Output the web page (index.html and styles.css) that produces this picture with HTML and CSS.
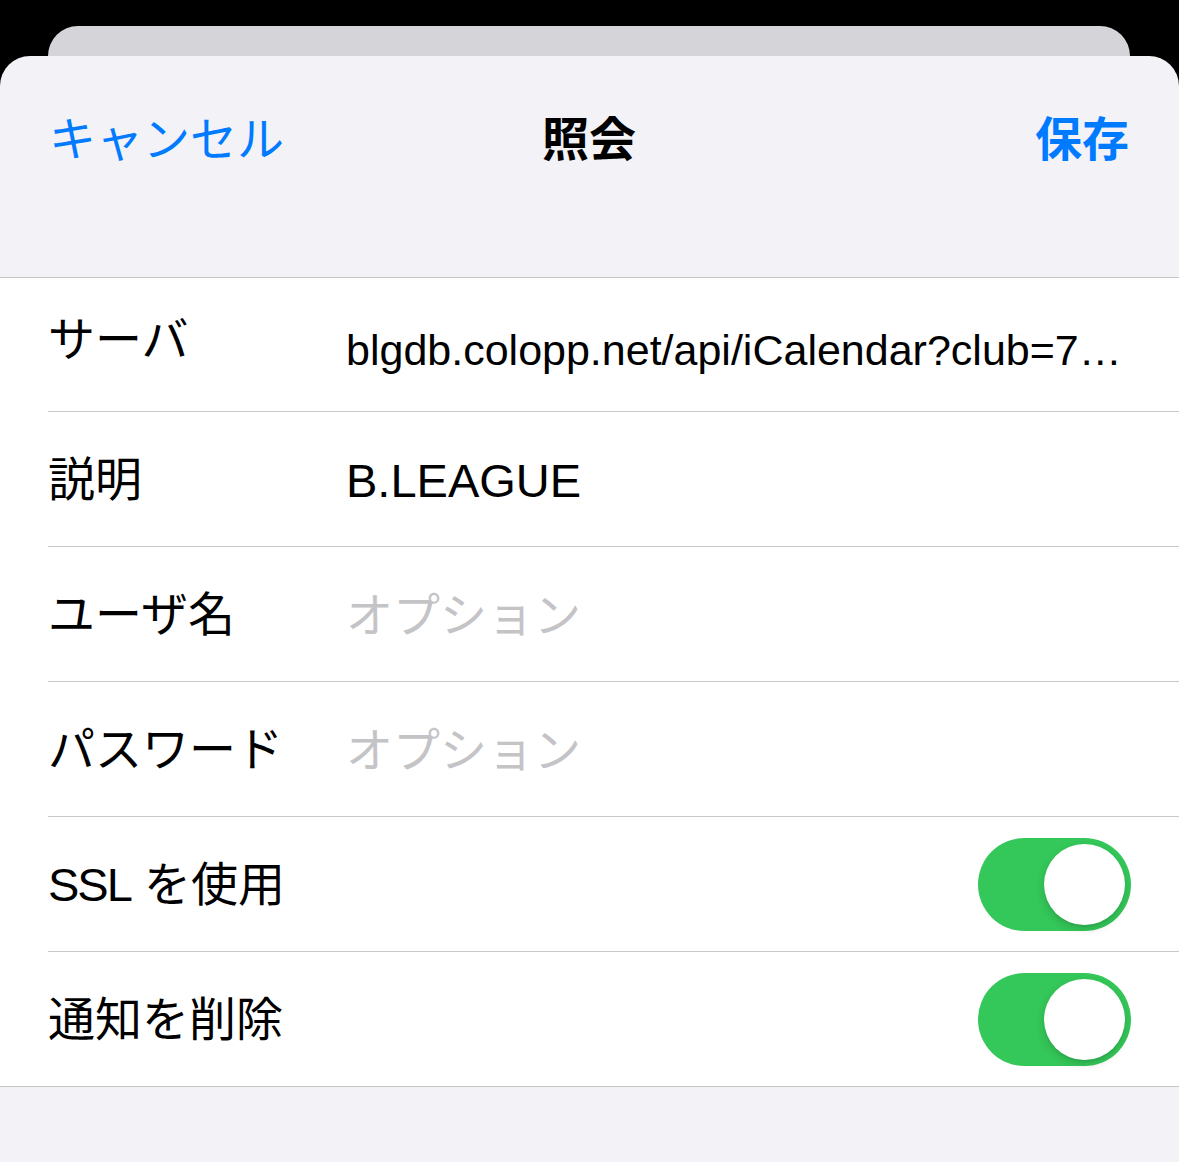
FILE: index.html
```html
<!DOCTYPE html>
<html lang="ja">
<head>
<meta charset="utf-8">
<title>照会</title>
<link rel="stylesheet" href="styles.css">
</head>
<body>
<div class="screen">
  <div class="back-card"></div>
  <div class="sheet">
    <header class="nav">
      <div class="nav-bar">
        <span class="nav-btn cancel">キャンセル</span>
        <span class="nav-title">照会</span>
        <span class="nav-btn save">保存</span>
      </div>
    </header>
    <section class="list">
      <div class="row row-server">
        <span class="label">サーバ</span>
        <span class="value url">blgdb.colopp.net/api/iCalendar?club=7…</span>
      </div>
      <div class="row">
        <span class="label">説明</span>
        <span class="value">B.LEAGUE</span>
      </div>
      <div class="row">
        <span class="label">ユーザ名</span>
        <span class="value placeholder">オプション</span>
      </div>
      <div class="row">
        <span class="label">パスワード</span>
        <span class="value placeholder">オプション</span>
      </div>
      <div class="row">
        <span class="label"><span class="latin">SSL</span> を使用</span>
        <span class="toggle"><span class="knob"></span></span>
      </div>
      <div class="row last">
        <span class="label">通知を削除</span>
        <span class="toggle"><span class="knob"></span></span>
      </div>
    </section>
  </div>
</div>
</body>
</html>
```
FILE: styles.css
```css
html, body {
  margin: 0;
  padding: 0;
  background: #000;
}
body {
  font-family: "Liberation Sans", "Noto Sans CJK JP", sans-serif;
  color: #000;
}
.screen {
  width: 1179px;
  height: 1162px;
  overflow: hidden;
  padding-top: 26px;
  box-sizing: border-box;
  display: flex;
  flex-direction: column;
}
.back-card {
  height: 30px;
  margin: 0 49px 0 48px;
  background: #d4d4d9;
  border-radius: 30px 30px 0 0;
  flex: none;
}
.sheet {
  flex: 1;
  background: #f2f2f7;
  border-radius: 30px 30px 0 0;
}
.nav {
  height: 221px;
  border-bottom: 1px solid #c6c6c8;
}
.nav-bar {
  height: 168px;
  display: grid;
  grid-template-columns: 1fr auto 1fr;
  align-items: center;
  padding: 0 50px 0 49px;
}
.nav-btn {
  font-size: 47px;
  line-height: 1.2;
  color: #007aff;
}
.cancel {
  justify-self: start;
}
.save {
  justify-self: end;
  font-weight: bold;
}
.nav-title {
  font-size: 47px;
  line-height: 1.2;
  font-weight: bold;
}
.list {
  background: #fff;
  border-bottom: 1px solid #c6c6c8;
}
.row {
  margin-left: 48px;
  height: 134px;
  border-bottom: 1px solid #c8c8ca;
  display: flex;
  align-items: center;
}
.row.last {
  border-bottom: none;
}
.row-server {
  height: 133px;
}
.label {
  width: 298px;
  flex: none;
  font-size: 47px;
  line-height: 1.2;
  padding-top: 3px;
}
.latin {
  letter-spacing: -2px;
}
.value {
  font-size: 47px;
  line-height: 1.2;
  white-space: nowrap;
  padding-top: 5px;
}
.url {
  font-size: 43px;
  padding-top: 12px;
}
.row-server .label {
  padding-top: 0;
  padding-bottom: 8px;
}
.placeholder {
  color: #c4c4c7;
}
.toggle {
  margin-left: auto;
  margin-right: 48px;
  width: 153px;
  height: 93px;
  border-radius: 47px;
  background: #34c759;
  box-sizing: border-box;
  padding: 6px;
  display: flex;
  justify-content: flex-end;
}
.knob {
  width: 81px;
  height: 81px;
  border-radius: 50%;
  background: #fff;
  box-shadow: 0 4px 10px rgba(0, 0, 0, 0.14), 0 2px 2px rgba(0, 0, 0, 0.06);
}
```
